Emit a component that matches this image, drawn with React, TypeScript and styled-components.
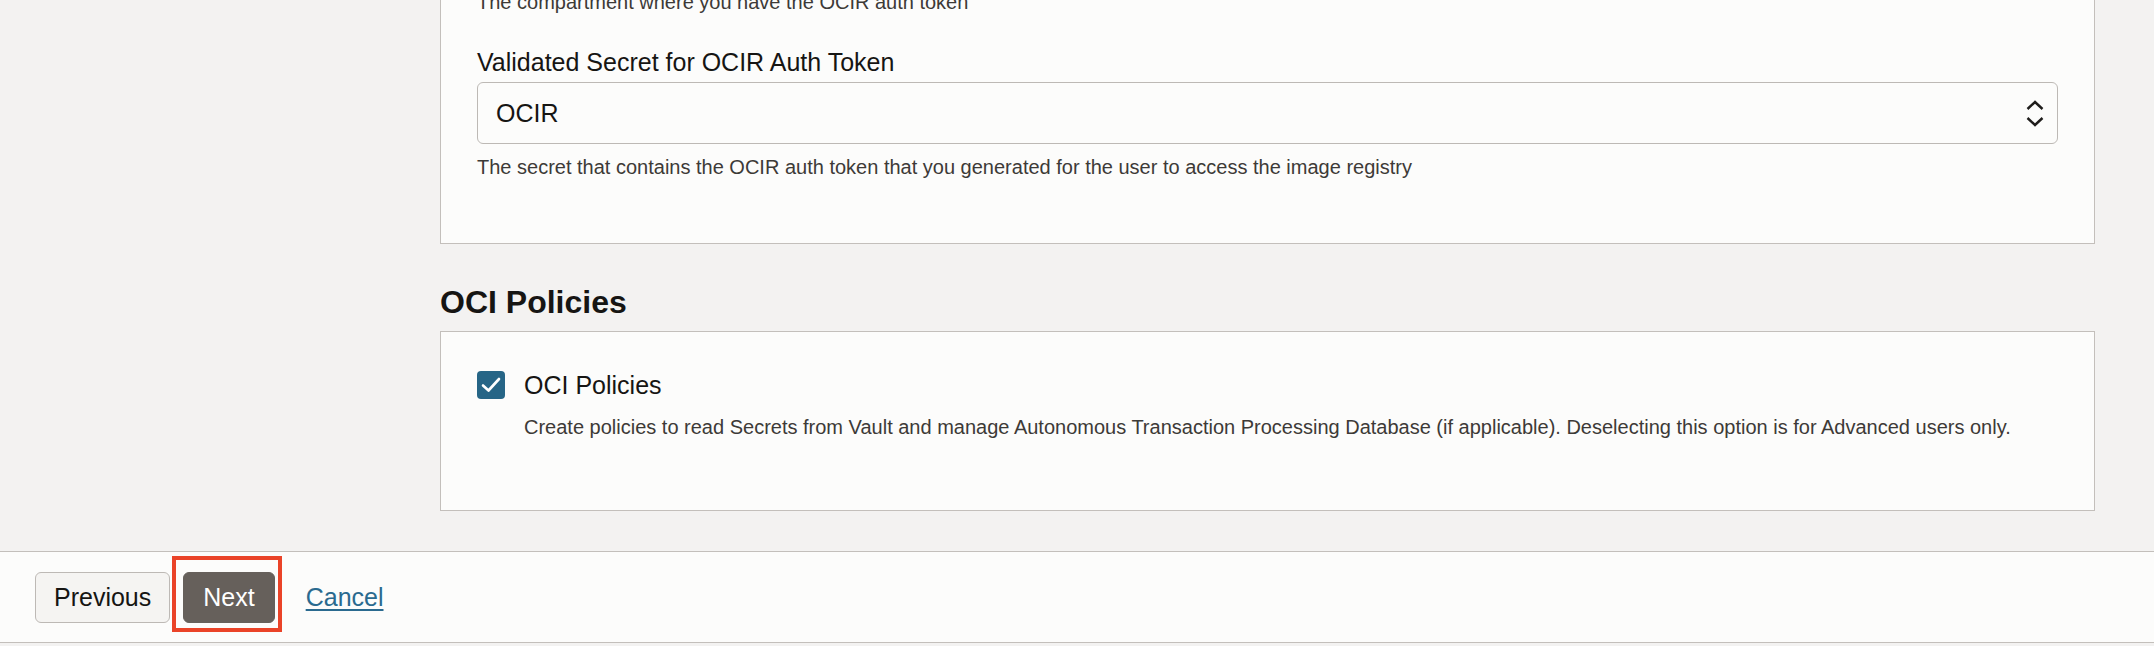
import styled, { createGlobalStyle } from "styled-components";

const GlobalStyle = createGlobalStyle`
  html, body {
    margin: 0;
    padding: 0;
    background: #f3f2f1;
    font-family: "Liberation Sans", Arial, Helvetica, sans-serif;
    color: #161513;
  }
`;

const Page = styled.div`
  height: 646px;
  display: flex;
  flex-direction: column;
  overflow: hidden;
`;

const Main = styled.main`
  flex: 1;
  overflow: hidden;
  padding: 0 59px 0 440px;
`;

// the first card is scrolled partly out of view
const Card = styled.section<{ $scrolled?: boolean }>`
  background: #fcfcfb;
  border: 1px solid #c3bfbb;
  padding: ${(p) => (p.$scrolled ? "24px 36px 64px" : "38px 36px 71px")};
  margin-top: ${(p) => (p.$scrolled ? "-35px" : "0")};
`;

const HelpText = styled.p<{ $gap?: number }>`
  margin: ${(p) => p.$gap ?? 0}px 0 0;
  font-size: 20px;
  line-height: 24px;
  color: #3d3a37;
`;

const Field = styled.div`
  margin-top: 33px;
`;

const Label = styled.label`
  display: block;
  font-size: 25px;
  line-height: 30px;
  color: #161513;
  margin-bottom: 5px;
`;

const Select = styled.div`
  height: 62px;
  box-sizing: border-box;
  border: 1px solid #bdb9b5;
  border-radius: 6px;
  background: #fcfcfb;
  display: flex;
  align-items: center;
  justify-content: space-between;
  padding: 0 13px 0 18px;
  font-size: 25px;
  color: #161513;
`;

const SectionTitle = styled.h2`
  margin: 38px 0 9px;
  font-size: 32px;
  line-height: 40px;
  font-weight: 700;
  color: #161513;
`;

const CheckRow = styled.div`
  display: flex;
  align-items: center;
  gap: 19px;
  height: 30px;
`;

const CheckBox = styled.span`
  width: 28px;
  height: 28px;
  border-radius: 4px;
  background: #266586;
  display: flex;
  align-items: center;
  justify-content: center;
  flex-shrink: 0;
`;

const CheckLabel = styled.span`
  font-size: 25px;
  line-height: 30px;
`;

const CheckHelp = styled(HelpText)`
  margin: 15px 0 0 47px;
`;

const Footer = styled.footer`
  height: 92px;
  box-sizing: border-box;
  margin-bottom: 3px;
  background: #fcfcfb;
  border-top: 1px solid #c3bfbb;
  border-bottom: 1px solid #c3bfbb;
  display: flex;
  align-items: center;
  padding-left: 35px;
`;

const Button = styled.button<{ $primary?: boolean }>`
  height: 51px;
  box-sizing: border-box;
  padding: 0 ${(p) => (p.$primary ? "19px" : "18px")};
  border-radius: 6px;
  border: 1px solid ${(p) => (p.$primary ? "#66605b" : "#bdb9b5")};
  background: ${(p) => (p.$primary ? "#66605b" : "#f5f4f2")};
  color: ${(p) => (p.$primary ? "#ffffff" : "#161513")};
  font-family: inherit;
  font-size: 25px;
  cursor: pointer;
`;

const Highlight = styled.span`
  position: relative;
  margin-left: 13px;
  display: inline-flex;
  &::after {
    content: "";
    position: absolute;
    top: -16px;
    bottom: -9px;
    left: -11px;
    right: -7px;
    border: 4px solid #ea4328;
    pointer-events: none;
  }
`;

const CancelLink = styled.a`
  margin-left: 31px;
  font-size: 25px;
  color: #2a6a8f;
  text-decoration: underline;
  text-underline-offset: 3px;
  cursor: pointer;
`;

const Chevrons = () => (
  <svg width="18" height="28" viewBox="0 0 18 28" fill="none">
    <polyline points="1.5,10 9,3 16.5,10" stroke="#1f1d1b" strokeWidth="2.4" />
    <polyline points="1.5,19 9,26 16.5,19" stroke="#1f1d1b" strokeWidth="2.4" />
  </svg>
);

const CheckMark = () => (
  <svg width="28" height="28" viewBox="0 0 28 28" fill="none">
    <path d="M6 14.5 L11.5 19.5 L22 8" stroke="#ffffff" strokeWidth="2.6" strokeLinecap="round" strokeLinejoin="round" />
  </svg>
);

const App = () => {
  return (
    <Page>
      <GlobalStyle />
      <Main>
        <Card $scrolled>
          <HelpText>The compartment where you have the OCIR auth token</HelpText>
          <Field>
            <Label>Validated Secret for OCIR Auth Token</Label>
            <Select>
              <span>OCIR</span>
              <Chevrons />
            </Select>
            <HelpText $gap={11}>
              The secret that contains the OCIR auth token that you generated for the user to access the image registry
            </HelpText>
          </Field>
        </Card>

        <SectionTitle>OCI Policies</SectionTitle>
        <Card>
          <CheckRow>
            <CheckBox>
              <CheckMark />
            </CheckBox>
            <CheckLabel>OCI Policies</CheckLabel>
          </CheckRow>
          <CheckHelp>
            Create policies to read Secrets from Vault and manage Autonomous Transaction Processing Database (if applicable). Deselecting this option is for Advanced users only.
          </CheckHelp>
        </Card>
      </Main>
      <Footer>
        <Button>Previous</Button>
        <Highlight>
          <Button $primary>Next</Button>
        </Highlight>
        <CancelLink>Cancel</CancelLink>
      </Footer>
    </Page>
  );
};

export default App;
